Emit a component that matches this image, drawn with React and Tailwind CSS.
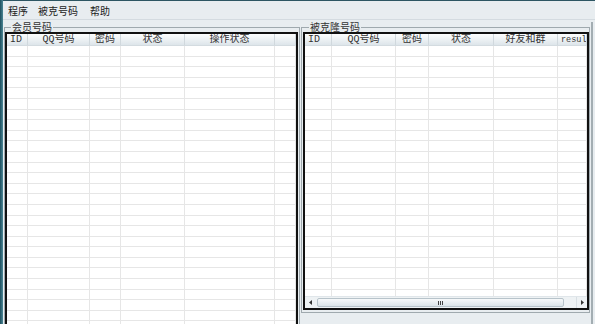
import React from 'react'

const LEFT_COLS = [
  { label: 'ID', w: 'w-[21px]', align: 'left' },
  { label: 'QQ号码', w: 'w-[62px]' },
  { label: '密码', w: 'w-[31px]' },
  { label: '状态', w: 'w-[64px]' },
  { label: '操作状态', w: 'w-[90px]' },
  { label: '', w: 'flex-1' },
]

const RIGHT_COLS = [
  { label: 'ID', w: 'w-[27px]', align: 'left' },
  { label: 'QQ号码', w: 'w-[64px]' },
  { label: '密码', w: 'w-[33px]' },
  { label: '状态', w: 'w-[65px]' },
  { label: '好友和群', w: 'w-[64px]' },
  { label: 'resul', w: 'flex-1', align: 'left', small: true },
]

const FONT = "font-['Liberation_Mono','Noto_Sans_CJK_SC',monospace]"

function ListView({ cols, rows, scroll }) {
  return (
    <div className="flex flex-col h-full bg-white border-2 border-[#111] overflow-hidden">
      {/* header */}
      <div className="flex h-[12px] shrink-0 bg-gradient-to-b from-[#fdfefe] to-[#dde5ea] border-b border-[#d3dbe0]">
        {cols.map((c, i) => (
          <div key={i}
            className={`${c.w} shrink-0 border-r border-[#d0d8dd] overflow-hidden whitespace-nowrap leading-[12px] text-[#333] ${FONT} ${c.small ? 'text-[8.5px]' : 'text-[10px]'} ${c.align === 'left' ? 'text-left pl-[3px]' : 'text-center'}`}>
            {c.label}
          </div>
        ))}
      </div>
      {/* rows */}
      <div className="flex-1 overflow-hidden">
        {Array.from({ length: rows }).map((_, r) => (
          <div key={r} className="flex h-[10.6px] border-b border-[#e6e6e6]">
            {cols.map((c, i) => (
              <div key={i} className={`${c.w} shrink-0 border-r border-[#e6e6e6]`} />
            ))}
          </div>
        ))}
      </div>
      {scroll && (
        <div className="flex h-[12px] shrink-0 bg-[#eef2f4] border-t border-[#e0e6ea]">
          <div className="w-[12px] flex items-center justify-center">
            <svg width="4" height="5" viewBox="0 0 4 5"><path d="M3 0 L0 2.5 L3 5 Z" fill="#333" /></svg>
          </div>
          <div className="w-[247px] my-[1px] rounded-[2px] border border-[#b7c3ca] bg-gradient-to-b from-[#f7f9fa] to-[#dbe4e9] flex items-center justify-center gap-[1px]">
            <span className="w-[1px] h-[4px] bg-[#444]" />
            <span className="w-[1px] h-[4px] bg-[#444]" />
            <span className="w-[1px] h-[4px] bg-[#444]" />
          </div>
          <div className="flex-1" />
          <div className="w-[11px] flex items-center justify-center border-l border-[#d8dfe3]">
            <svg width="4" height="5" viewBox="0 0 4 5"><path d="M1 0 L4 2.5 L1 5 Z" fill="#333" /></svg>
          </div>
        </div>
      )}
    </div>
  )
}

export default function App() {
  return (
    <div className="w-[595px] h-[324px] overflow-hidden flex bg-[#e8edf0] font-['Noto_Sans_CJK_SC',sans-serif]">
      {/* window frame left */}
      <div className="w-[3px] shrink-0 bg-gradient-to-r from-[#1d4f5e] to-[#4b8796]" />

      <div className="flex-1 flex flex-col border-t border-[#2d5663]">
        {/* menu bar */}
        <div className="flex items-center h-[19px] shrink-0 text-[10px] text-[#222] border-b border-[#d4dbe0]">
          <span className="ml-[5px]">程序</span>
          <span className="ml-[10px]">被克号码</span>
          <span className="ml-[12px]">帮助</span>
        </div>

        <div className="flex flex-1 min-h-0 mt-[2px]">
          {/* left group */}
          <fieldset className="ml-[1px] w-[296px] h-[320px] shrink-0 border border-[#9fa9ae] pr-[1px] min-w-0">
            <legend className="ml-[6px] px-[1px] text-[10px] leading-[10px] text-[#333]">会员号码</legend>
            <div className="h-[300px]">
              <ListView cols={LEFT_COLS} rows={28} />
            </div>
          </fieldset>

          {/* right group */}
          <fieldset className="ml-[1px] w-[289px] h-[291px] shrink-0 border border-[#9fa9ae] pl-[1px] min-w-0">
            <legend className="ml-[6px] px-[1px] text-[10px] leading-[10px] text-[#333]">被克隆号码</legend>
            <div className="h-[278px] w-[286px]">
              <ListView cols={RIGHT_COLS} rows={24} scroll />
            </div>
          </fieldset>

          {/* window frame right */}
          <div className="w-[2px] ml-[1px] shrink-0 bg-[#a3adb2]" />
        </div>
      </div>
    </div>
  )
}
